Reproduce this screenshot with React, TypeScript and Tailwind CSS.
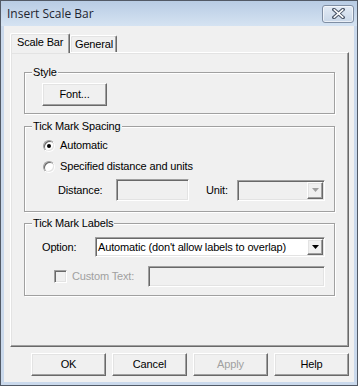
import React from "react";

const raised =
  "border border-t-white border-l-white border-r-[#696969] border-b-[#696969] shadow-[inset_-1px_-1px_0_#a0a0a0,inset_1px_1px_0_#e3e3e3]";
const sunken =
  "border border-t-[#a0a0a0] border-l-[#a0a0a0] border-r-white border-b-white shadow-[inset_1px_1px_0_#696969,inset_-1px_-1px_0_#e3e3e3]";

function Group({ label, children, className }: { label: string; children: React.ReactNode; className: string }) {
  return (
    <div className={"relative ml-[13px] w-[311px] border border-[#a0a0a0] shadow-[inset_1px_1px_0_#fff,1px_1px_0_#fff] " + className}>
      <span className="absolute left-[7px] -top-[7px] px-[1px] bg-[#f0f0f0] leading-[13px]">{label}</span>
      {children}
    </div>
  );
}

function Radio({ checked }: { checked?: boolean }) {
  return (
    <div className="w-[12px] h-[12px] rounded-full border border-t-[#a0a0a0] border-l-[#a0a0a0] border-r-white border-b-white">
      <div className="w-full h-full rounded-full bg-white shadow-[inset_1px_1px_0_#696969,inset_-1px_-1px_0_#e3e3e3] flex items-center justify-center">
        {checked && <div className="w-[4px] h-[4px] rounded-full bg-black" />}
      </div>
    </div>
  );
}

function Arrow({ color }: { color: string }) {
  return (
    <svg width="7" height="4" viewBox="0 0 7 4">
      <path d="M0 0H7L3.5 4Z" fill={color} />
    </svg>
  );
}

function Combo({ w, h, text, disabled }: { w: string; h: string; text?: string; disabled?: boolean }) {
  return (
    <div className={`${w} ${h} ${sunken} p-[1px] flex ${disabled ? "bg-[#f0f0f0]" : "bg-white"}`}>
      <div className="flex-1 pl-[1px] flex items-center whitespace-nowrap overflow-hidden">{text}</div>
      <div className={`w-[16px] h-full ${raised} bg-[#f0f0f0] flex items-center justify-center`}>
        <Arrow color={disabled ? "#a0a0a0" : "#000"} />
      </div>
    </div>
  );
}

function Btn({ children, disabled, w }: { children: React.ReactNode; disabled?: boolean; w: string }) {
  return (
    <div className={`${w} h-[23px] ${raised} bg-[#f0f0f0] flex items-center justify-center ${disabled ? "text-[#a0a0a0]" : "text-black"}`}>
      {children}
    </div>
  );
}

function CloseBtn() {
  return (
    <div className="w-[32px] h-[18px] rounded-[3px] border border-[#7f8ea3] bg-gradient-to-b from-[#e3ebf5] to-[#c9d7e8] shadow-[inset_0_0_0_1px_rgba(255,255,255,0.6)] flex items-center justify-center">
      <svg width="13" height="11" viewBox="0 0 13 11">
        <path d="M2 1.5L11 9.5M11 1.5L2 9.5" stroke="#4b5668" strokeWidth="3.6" strokeLinecap="square" />
        <path d="M2.3 1.8L10.7 9.2M10.7 1.8L2.3 9.2" stroke="#ffffff" strokeWidth="1.6" strokeLinecap="square" />
      </svg>
    </div>
  );
}

export default function App() {
  return (
    <div className="w-[358px] h-[386px] bg-[#cad9ec] border border-[#525a66] flex flex-col font-['Liberation_Sans',Arial,sans-serif] text-[11px] leading-[13px] text-black tracking-[-0.15px] overflow-hidden">
      <div className="h-[25px] shrink-0 flex items-center justify-between bg-gradient-to-b from-[#b8cce4] to-[#d5e3f2] pl-[6px] pr-[3px]">
        <span className="font-['Segoe_UI','Open_Sans',sans-serif] text-[12px] leading-[16px] text-[#1e2530] tracking-normal">Insert Scale Bar</span>
        <CloseBtn />
      </div>
      <div className="flex-1 mx-[3px] mb-[3px] bg-[#f0f0f0] flex flex-col pl-[6px] pr-[5px] pt-[7px]">
        {/* tabs */}
        <div className="h-[19px] flex items-end">
          <div className="relative z-10 -mb-[1px] w-[60px] h-[20px] bg-[#f0f0f0] border-l border-t border-r border-l-white border-t-white border-r-[#696969] rounded-t-[2px] shadow-[inset_-1px_0_0_#a0a0a0,inset_1px_1px_0_#e3e3e3] pl-[6px] pt-[2px]">
            Scale Bar
          </div>
          <div className="w-[47px] h-[17px] bg-[#f0f0f0] border-l border-t border-r border-l-white border-t-white border-r-[#696969] rounded-t-[2px] shadow-[inset_-1px_0_0_#a0a0a0,inset_1px_1px_0_#e3e3e3] pl-[4px] pt-[2px]">
            General
          </div>
        </div>
        {/* panel */}
        <div className={`w-[339px] h-[295px] ${raised} flex flex-col`}>
          <Group label="Style" className="mt-[19px] pt-[10px] pb-[7px] pl-[17px]">
            <Btn w="w-[65px]">Font...</Btn>
          </Group>
          <Group label="Tick Mark Spacing" className="mt-[12px] pt-[12px] pb-[10px]">
            <div className="h-[13px] flex items-center pl-[18px]">
              <Radio checked />
              <span className="ml-[5px]">Automatic</span>
            </div>
            <div className="mt-[8px] h-[13px] flex items-center pl-[18px]">
              <Radio />
              <span className="ml-[5px]">Specified distance and units</span>
            </div>
            <div className="mt-[6px] h-[22px] flex items-center pl-[33px]">
              <span className="w-[58px]">Distance:</span>
              <div className={`w-[73px] h-[22px] ${sunken} bg-[#f0f0f0]`} />
              <span className="ml-[17px] w-[31px]">Unit:</span>
              <Combo w="w-[88px]" h="h-[21px]" disabled />
            </div>
          </Group>
          <Group label="Tick Mark Labels" className="mt-[11px] pt-[13px] pb-[8px]">
            <div className="h-[20px] flex items-center pl-[17px]">
              <span className="w-[53px]">Option:</span>
              <Combo w="w-[230px]" h="h-[20px]" text={"Automatic (don't allow labels to overlap)"} />
            </div>
            <div className="mt-[9px] h-[21px] flex items-center pl-[29px]">
              <div className={`w-[13px] h-[13px] ${sunken} bg-[#f0f0f0]`} />
              <span className="ml-[5px] w-[76px] text-[#a0a0a0]">Custom Text:</span>
              <div className={`w-[177px] h-[21px] ${sunken} bg-[#f0f0f0]`} />
            </div>
          </Group>
        </div>
        {/* buttons */}
        <div className="mt-[6px] flex justify-end gap-[6px]">
          <Btn w="w-[75px]">OK</Btn>
          <Btn w="w-[75px]">Cancel</Btn>
          <Btn w="w-[75px]" disabled>Apply</Btn>
          <Btn w="w-[75px]">Help</Btn>
        </div>
      </div>
    </div>
  );
}
